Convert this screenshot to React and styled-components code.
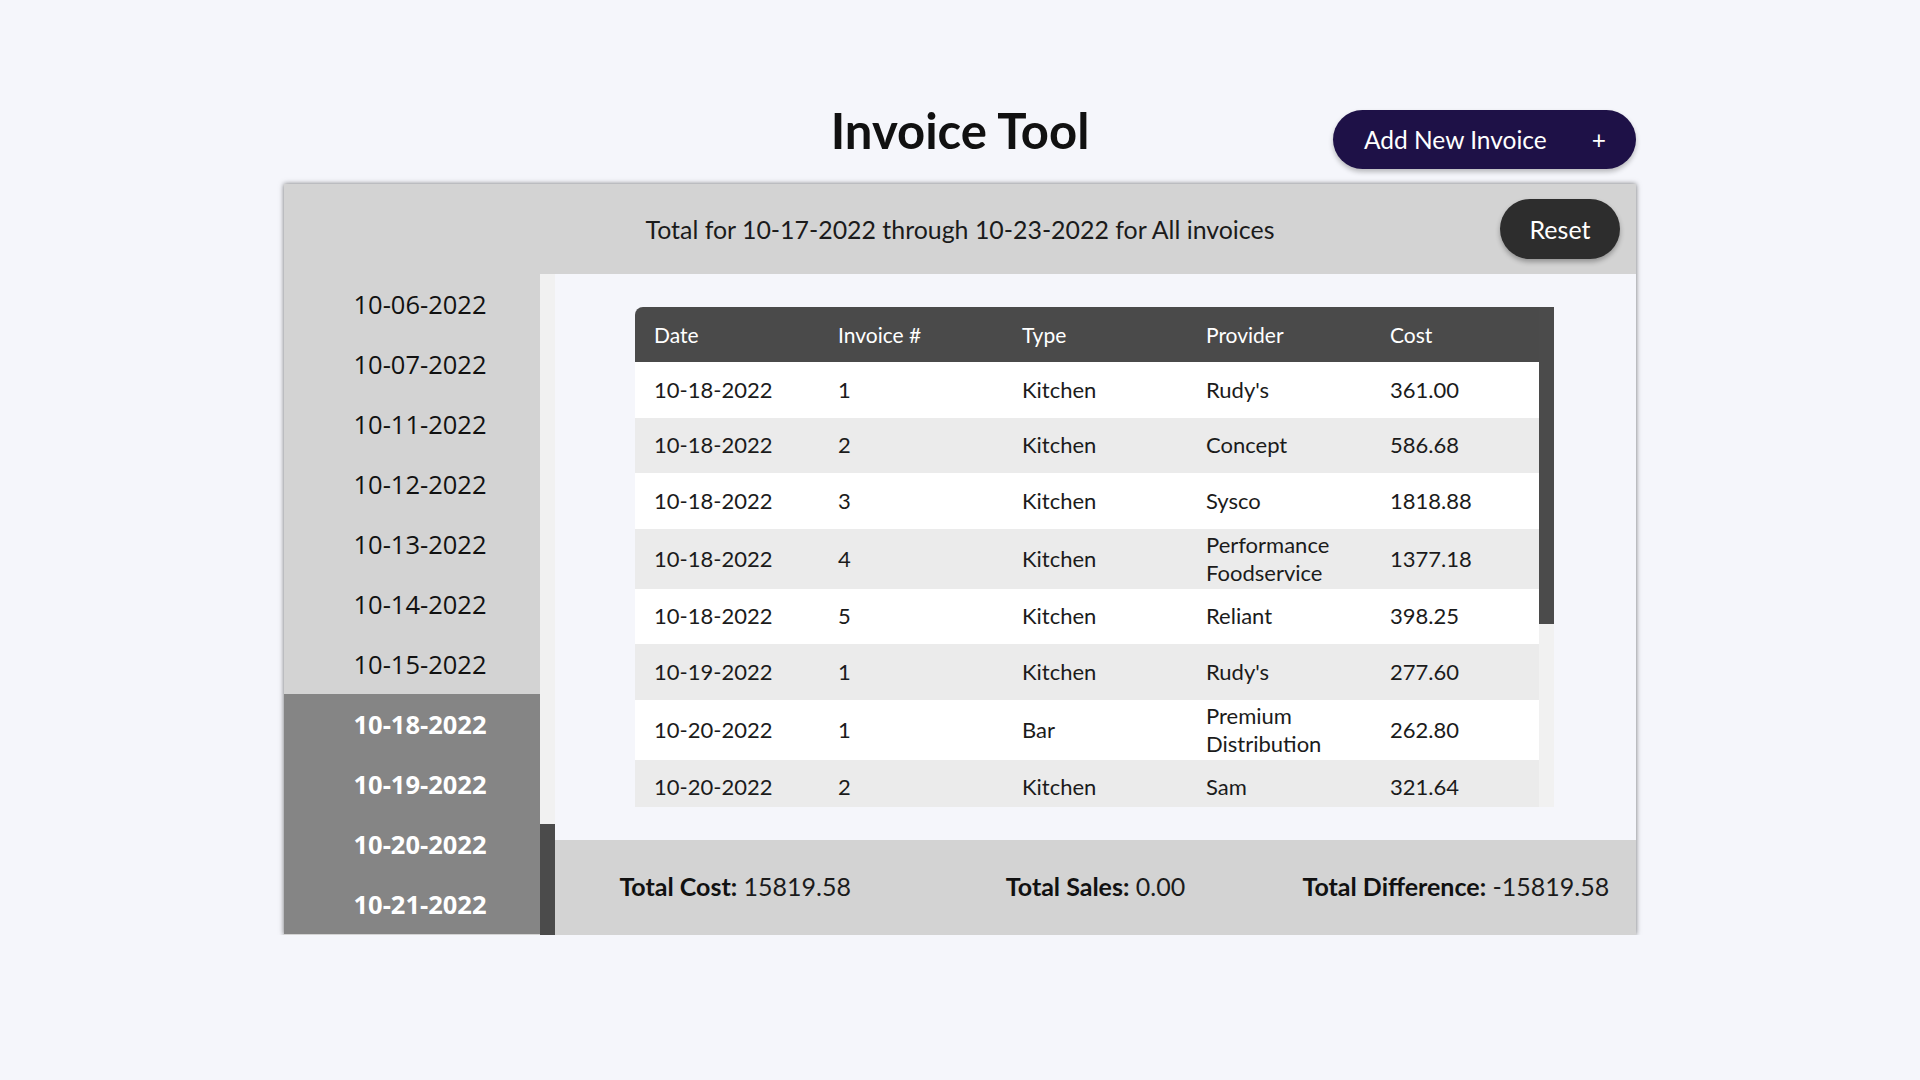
import React from 'react';
import styled, { createGlobalStyle } from 'styled-components';

const GlobalStyle = createGlobalStyle`
  body {
    margin: 0;
    background-color: #f5f6fb;
    font-family: Lato, 'Noto Sans', sans-serif;
    color: #111;
  }
`;

const Page = styled.div`
  width: 1352px;
  margin: 0 auto;
  padding-top: 99px;
`;

const TopBar = styled.div`
  display: grid;
  grid-template-columns: 1fr auto 1fr;
  align-items: start;
  height: 85px;
`;

const Title = styled.h1`
  grid-column: 2;
  margin: 0;
  font-size: 49px;
  line-height: 62px;
  font-weight: 700;
`;

const AddButton = styled.button`
  justify-self: end;
  display: flex;
  align-items: center;
  gap: 45px;
  height: 59px;
  margin-top: 11px;
  padding: 0 30px 0 31px;
  border: none;
  border-radius: 30px;
  background-color: #1e1147;
  color: #fff;
  font-family: inherit;
  font-size: 24.5px;
  box-shadow: 0 3px 5px rgba(0, 0, 0, 0.25);
  cursor: pointer;
`;

const Card = styled.div`
  display: grid;
  grid-template-rows: 90px 661px;
  box-shadow: 0 0 5px rgba(0, 0, 0, 0.55);
`;

const CardHeader = styled.div`
  display: grid;
  grid-template-columns: 1fr auto 1fr;
  align-items: center;
  padding: 0 16px;
  background-color: #d3d3d3;
`;

const RangeText = styled.div`
  grid-column: 2;
  font-size: 24.9px;
  color: #1b1b1b;
`;

const ResetButton = styled.button`
  justify-self: end;
  width: 120px;
  height: 60px;
  border: none;
  border-radius: 30px;
  background-color: #2d2d2d;
  color: #fff;
  font-family: inherit;
  font-size: 25px;
  box-shadow: 0 3px 5px rgba(0, 0, 0, 0.3);
  cursor: pointer;
`;

const CardBody = styled.div`
  display: grid;
  grid-template-columns: 256px 15px 1fr;
  min-height: 0;
`;

const DateList = styled.div`
  overflow: hidden;
  background-color: #d3d3d3;
`;

const DateItem = styled.div`
  height: 60px;
  display: flex;
  align-items: center;
  justify-content: center;
  padding-left: 16px;
  font-family: 'Open Sans', 'Noto Sans', sans-serif;
  font-size: 25.5px;
  font-weight: ${props => (props.$selected ? 700 : 400)};
  color: ${props => (props.$selected ? '#fff' : '#111')};
  background-color: ${props => (props.$selected ? '#858585' : 'transparent')};
`;

const ScrollTrack = styled.div`
  display: flex;
  flex-direction: column;
  justify-content: ${props => (props.$atEnd ? 'flex-end' : 'flex-start')};
  width: 15px;
  background-color: #f1f1f1;
`;

const ScrollThumb = styled.div`
  height: ${props => props.$size}px;
  background-color: #4b4b4b;
`;

const Main = styled.div`
  display: flex;
  flex-direction: column;
  min-width: 0;
`;

const TableArea = styled.div`
  flex: 1;
  padding: 33px 0 0 80px;
  background-color: #f5f6fb;
`;

const TableFrame = styled.div`
  display: grid;
  grid-template-columns: 904px 15px;
  width: 919px;
  height: 500px;
  overflow: hidden;
  border-top-left-radius: 8px;
`;

const TableClip = styled.div`
  overflow: hidden;
`;

const Table = styled.table`
  width: 904px;
  border-collapse: collapse;
  table-layout: fixed;
`;

const HeadCell = styled.th`
  box-sizing: border-box;
  height: 55px;
  padding: 0 19px;
  width: ${props => props.$w || 'auto'};
  background-color: #4a4a4a;
  color: #fff;
  font-size: 21px;
  font-weight: 400;
  text-align: left;
`;

const Row = styled.tr`
  height: 55.5px;
  background-color: ${props => (props.$shaded ? '#ebebeb' : '#fff')};
`;

const Cell = styled.td`
  box-sizing: border-box;
  padding: 2px 19px;
  font-size: 22px;
  line-height: 28px;
  color: #1b1b1b;
`;

const Footer = styled.div`
  display: grid;
  grid-template-columns: repeat(3, 1fr);
  align-items: center;
  height: 95px;
  padding-bottom: 4px;
  box-sizing: border-box;
  background-color: #d3d3d3;
  font-size: 25px;
`;

const Total = styled.div`
  text-align: center;
  color: #1b1b1b;
`;

const Label = styled.span`
  font-weight: 700;
  color: #111;
`;

const dates = [
  '10-06-2022', '10-07-2022', '10-11-2022', '10-12-2022', '10-13-2022',
  '10-14-2022', '10-15-2022', '10-18-2022', '10-19-2022', '10-20-2022', '10-21-2022',
];
const selectedDates = ['10-18-2022', '10-19-2022', '10-20-2022', '10-21-2022'];

const invoices = [
  { date: '10-18-2022', num: 1, type: 'Kitchen', provider: "Rudy's", cost: '361.00' },
  { date: '10-18-2022', num: 2, type: 'Kitchen', provider: 'Concept', cost: '586.68' },
  { date: '10-18-2022', num: 3, type: 'Kitchen', provider: 'Sysco', cost: '1818.88' },
  { date: '10-18-2022', num: 4, type: 'Kitchen', provider: 'Performance Foodservice', cost: '1377.18' },
  { date: '10-18-2022', num: 5, type: 'Kitchen', provider: 'Reliant', cost: '398.25' },
  { date: '10-19-2022', num: 1, type: 'Kitchen', provider: "Rudy's", cost: '277.60' },
  { date: '10-20-2022', num: 1, type: 'Bar', provider: 'Premium Distribution', cost: '262.80' },
  { date: '10-20-2022', num: 2, type: 'Kitchen', provider: 'Sam', cost: '321.64' },
];

const App = () => (
  <>
    <GlobalStyle />
    <Page>
      <TopBar>
        <Title>Invoice Tool</Title>
        <AddButton>
          <span>Add New Invoice</span>
          <span>+</span>
        </AddButton>
      </TopBar>

      <Card>
        <CardHeader>
          <RangeText>Total for 10-17-2022 through 10-23-2022 for All invoices</RangeText>
          <ResetButton>Reset</ResetButton>
        </CardHeader>

        <CardBody>
          <DateList>
            {dates.map(date => (
              <DateItem key={date} $selected={selectedDates.includes(date)}>
                {date}
              </DateItem>
            ))}
          </DateList>
          <ScrollTrack $atEnd>
            <ScrollThumb $size={111} />
          </ScrollTrack>

          <Main>
            <TableArea>
              <TableFrame>
                <TableClip>
                  <Table>
                    <thead>
                      <tr>
                        <HeadCell $w="184px">Date</HeadCell>
                        <HeadCell $w="184px">Invoice #</HeadCell>
                        <HeadCell $w="184px">Type</HeadCell>
                        <HeadCell $w="184px">Provider</HeadCell>
                        <HeadCell>Cost</HeadCell>
                      </tr>
                    </thead>
                    <tbody>
                      {invoices.map((inv, i) => (
                        <Row key={`${inv.date}-${inv.num}`} $shaded={i % 2 === 1}>
                          <Cell>{inv.date}</Cell>
                          <Cell>{inv.num}</Cell>
                          <Cell>{inv.type}</Cell>
                          <Cell>{inv.provider}</Cell>
                          <Cell>{inv.cost}</Cell>
                        </Row>
                      ))}
                    </tbody>
                  </Table>
                </TableClip>
                <ScrollTrack>
                  <ScrollThumb $size={317} />
                </ScrollTrack>
              </TableFrame>
            </TableArea>

            <Footer>
              <Total><Label>Total Cost:</Label> 15819.58</Total>
              <Total><Label>Total Sales:</Label> 0.00</Total>
              <Total><Label>Total Difference:</Label> -15819.58</Total>
            </Footer>
          </Main>
        </CardBody>
      </Card>
    </Page>
  </>
);

export default App;
